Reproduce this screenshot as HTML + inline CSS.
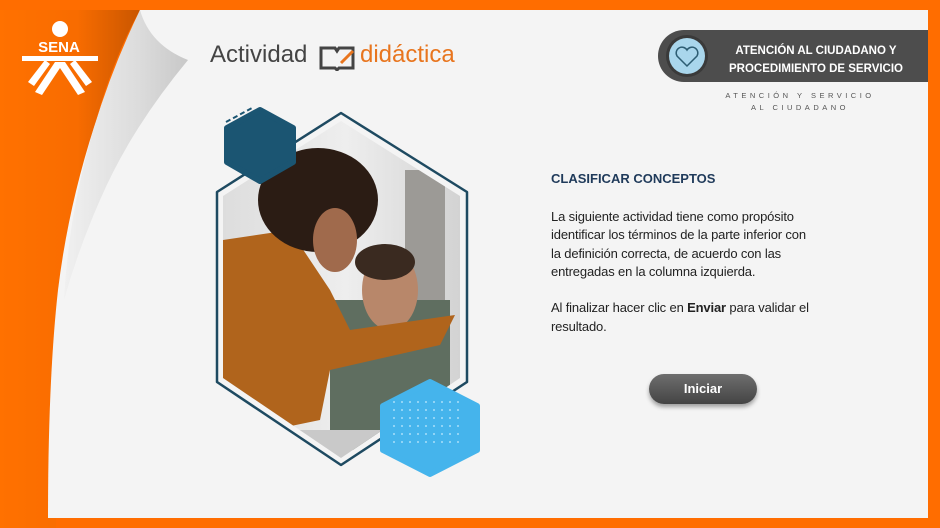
<!DOCTYPE html>
<html><head><meta charset="utf-8"><style>
body{margin:0;width:940px;height:528px;overflow:hidden;background:#ff6d00;font-family:"Liberation Sans",sans-serif;position:relative}
.abs{position:absolute}
</style></head><body>
<svg class="abs" style="left:0;top:0" width="940" height="528" viewBox="0 0 940 528">
<defs>
<linearGradient id="og" x1="0" x2="1"><stop offset="0" stop-color="#ff7100"/><stop offset="0.55" stop-color="#f86c00"/><stop offset="1" stop-color="#c95600"/></linearGradient>
<linearGradient id="curl" x1="0" y1="0" x2="1" y2="0"><stop offset="0" stop-color="#f0f0f0"/><stop offset="0.6" stop-color="#dcdcdc"/><stop offset="1" stop-color="#c8c8c8"/></linearGradient>
<clipPath id="hx"><polygon points="341,121 460,196 460,378 341,458 223,378 223,196"/></clipPath>
<linearGradient id="bgp" x1="0" x2="1"><stop offset="0" stop-color="#dcdcdc"/><stop offset="0.5" stop-color="#eeeeee"/><stop offset="1" stop-color="#cfcfcf"/></linearGradient>
<pattern id="dp" width="8" height="8" patternUnits="userSpaceOnUse"><circle cx="2" cy="2" r="1" fill="#a8defa"/></pattern>
</defs>
<path d="M0,10 L140,10 Q90,100 70,250 Q55,380 56,528 L0,528 Z" fill="url(#og)"/>
<path d="M140,10 L928,10 L928,518 L48,518 Q48,380 58,290 Q75,150 140,10 Z" fill="#f4f4f4"/>
<path d="M140,10 Q150,45 188,60 Q130,130 100,200 Q78,250 64,300 Q72,150 140,10 Z" fill="url(#curl)"/>
<g clip-path="url(#hx)">
<rect x="216" y="113" width="260" height="360" fill="url(#bgp)"/>
<rect x="405" y="170" width="40" height="280" fill="#9c9a96"/>
<rect x="330" y="300" width="120" height="150" fill="#5f6e60"/>
<ellipse cx="390" cy="290" rx="28" ry="40" fill="#b8876a"/>
<ellipse cx="385" cy="262" rx="30" ry="18" fill="#3a2a20"/>
<path d="M223,240 L290,230 L330,290 L350,330 L455,315 L440,345 L330,370 L320,420 L223,440 Z" fill="#b0641c"/>
<ellipse cx="318" cy="200" rx="60" ry="52" fill="#2b1c14"/>
<ellipse cx="335" cy="240" rx="22" ry="32" fill="#a06a4c"/>
<rect x="223" y="430" width="240" height="40" fill="#c9c9c9"/>
</g>
<polygon points="341,113 467,192 467,382 341,465 217,382 217,192" fill="none" stroke="#1e4a61" stroke-width="2.5" stroke-linejoin="round"/>
<polygon points="260,110 293,128 293,162 260,181 227,162 227,128" fill="#1b5572" stroke="#1b5572" stroke-width="6" stroke-linejoin="round"/>
<path d="M226,122 L252,108" stroke="#1b5572" stroke-width="2" stroke-dasharray="5,3"/>
<polygon points="430,382 477,406 477,450 430,474 383,450 383,406" fill="#45b4ec" stroke="#45b4ec" stroke-width="6" stroke-linejoin="round"/>
<rect x="392" y="395" width="70" height="50" fill="url(#dp)"/>
<g fill="#fff">
<circle cx="60" cy="29" r="8"/>
<text x="59" y="52" font-size="15" font-weight="bold" text-anchor="middle" font-family="Liberation Sans">SENA</text>
<rect x="22" y="56" width="76" height="5"/>
<path d="M45,60 L28,82 L34,86 L50,64 Z M75,60 L92,82 L86,86 L70,64 Z M55,62 L35,92 L42,95 L60,68 L78,95 L85,92 L65,62 Z"/>
</g>
<path d="M684,30 L928,30 L928,82 L684,82 A26,26 0 0 1 684,30 Z" fill="#4d4d4d"/>
<circle cx="687" cy="56" r="21" fill="#3a3a3a"/>
<circle cx="687" cy="56" r="18" fill="#a9d6ec"/>
<path d="M687,66 L677,56 A5,5 0 0 1 687,50 A5,5 0 0 1 697,56 Z" fill="none" stroke="#2d5d73" stroke-width="1.5"/>
</svg>
<div class="abs" style="left:210px;top:41px;font-size:24px;color:#444">Actividad</div>
<svg class="abs" style="left:319px;top:45px" width="38" height="26" viewBox="0 0 38 26"><path d="M2,3 L16,3 L18,6 L20,3 L34,3 L34,23 L20,23 L18,25 L16,23 L2,23 Z" fill="none" stroke="#444" stroke-width="3"/><path d="M22,18 L34,6" stroke="#e8751e" stroke-width="3"/></svg>
<div class="abs" style="left:360px;top:41px;font-size:24px;color:#e8751e">didáctica</div>
<div class="abs" style="left:718px;top:42px;width:196px;text-align:center;color:#fff;font-size:11.5px;line-height:18px;font-weight:bold">ATENCIÓN AL CIUDADANO Y<br>PROCEDIMIENTO DE SERVICIO</div>
<div class="abs" style="left:715px;top:90px;width:170px;text-align:center;color:#555;font-size:7.5px;line-height:12px;letter-spacing:3.5px">ATENCIÓN Y SERVICIO<br>AL CIUDADANO</div>
<div class="abs" style="left:551px;top:171px;font-size:13px;font-weight:bold;color:#1f3a5a">CLASIFICAR CONCEPTOS</div>
<div class="abs" style="left:551px;top:208px;white-space:nowrap;font-size:13px;line-height:18.3px;color:#222;letter-spacing:-0.15px">La siguiente actividad tiene como propósito<br>identificar los términos de la parte inferior con<br>la definición correcta, de acuerdo con las<br>entregadas en la columna izquierda.<br><br>Al finalizar hacer clic en <b>Enviar</b> para validar el<br>resultado.</div>
<div class="abs" style="left:649px;top:374px;width:108px;height:30px;border-radius:15px;background:linear-gradient(#6e6e6e,#444);box-shadow:0 3px 4px rgba(0,0,0,.35);color:#fff;font-weight:bold;font-size:13px;line-height:30px;text-align:center">Iniciar</div>
</body></html>
